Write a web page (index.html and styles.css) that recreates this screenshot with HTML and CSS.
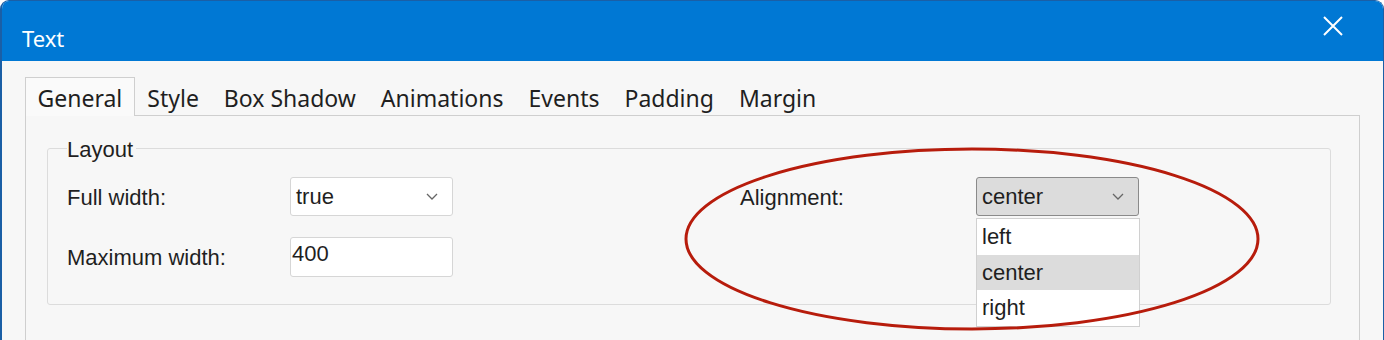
FILE: index.html
```html
<!DOCTYPE html>
<html lang="en">
<head>
  <meta charset="UTF-8" />
  <title>Text</title>
  <link rel="stylesheet" href="styles.css">
</head>
<body>
  <div class="window">
    <!-- TITLE BAR -->
    <header class="titlebar">
      <span class="title">Text</span>
      <svg class="close" width="20" height="20" viewBox="0 0 20 20">
        <path d="M1 1 L19 19 M19 1 L1 19" stroke="#fff" stroke-width="2" fill="none"/>
      </svg>
    </header>

    <div class="dialog-body">
      <!-- TABS -->
      <div class="tabs">
        <a class="tab active">General</a>
        <a class="tab">Style</a>
        <a class="tab">Box Shadow</a>
        <a class="tab">Animations</a>
        <a class="tab">Events</a>
        <a class="tab">Padding</a>
        <a class="tab">Margin</a>
      </div>

      <div class="tab-panel">
        <fieldset class="group">
          <legend>Layout</legend>
          <div class="form-grid">
            <label class="lbl">Full width:</label>
            <div class="select">
              <span>true</span>
              <svg class="chev" width="12" height="8" viewBox="0 0 12 8"><path d="M1 1 L6 6 L11 1" stroke="#666" stroke-width="1.3" fill="none"/></svg>
            </div>
            <span></span>
            <label class="lbl">Alignment:</label>
            <div class="select open">
              <span>center</span>
              <svg class="chev" width="12" height="8" viewBox="0 0 12 8"><path d="M1 1 L6 6 L11 1" stroke="#666" stroke-width="1.3" fill="none"/></svg>
              <ul class="options">
                <li>left</li>
                <li class="selected">center</li>
                <li>right</li>
              </ul>
            </div>

            <label class="lbl">Maximum width:</label>
            <div class="input">400</div>
          </div>
        </fieldset>
      </div>
    </div>

    <!-- annotation -->
    <svg class="mark" width="590" height="190" viewBox="0 0 590 190">
      <ellipse cx="295" cy="95" rx="286" ry="90" fill="none" stroke="#b71c0c" stroke-width="3"/>
    </svg>
  </div>
</body>
</html>
```

FILE: styles.css
```css
:root {
  --blue: #0078d4;
  --bg: #f7f7f7;
  --line: #cfcfcf;
  --text: #1f1f1f;
}

*, *::before, *::after { box-sizing: border-box; margin: 0; padding: 0; }
body {
  background: #fff;
  width: 1384px;
  height: 340px;
  overflow: hidden;
}

.window {
  position: relative;
  width: 1384px;
  height: 340px;
  background: var(--bg);
  border: 1px solid #1a5fa6;
  border-left-width: 2px;
  border-bottom: none;
  border-radius: 9px 9px 0 0;
  overflow: hidden;
}

/* TITLE BAR */
.titlebar {
  height: 60px;
  background: var(--blue);
  display: flex;
  align-items: center;
  justify-content: space-between;
  padding: 0 40px 0 20px;
}
.title {
  font-family: "Noto Sans", sans-serif;
  font-size: 22px;
  color: #fff;
  padding-top: 14px;
}
.close { margin-top: -10px; }

/* TABS */
.dialog-body {
  padding: 16px 23px 0 23px;
}
.tabs {
  display: flex;
  height: 38px;
  font-family: "Noto Sans", sans-serif;
  font-size: 23px;
  color: var(--text);
}
.tab {
  padding: 0 11.5px;
  line-height: 40px;
  border: 1px solid transparent;
  border-bottom: none;
}
.tab.active {
  background: #fafafa;
  border-color: var(--line);
  position: relative;
  z-index: 1;
  height: 39px;
}

.tab-panel {
  border: 1px solid var(--line);
  background: var(--bg);
  height: 240px;
  padding: 20px 28px 0 21px;
}

/* GROUP BOX */
.group {
  border: 1px solid #dcdcdc;
  border-radius: 3px;
  height: 169px;
  padding: 17px 0 0 19px;
  font-family: "Liberation Sans", Arial, sans-serif;
  font-size: 22px;
  color: var(--text);
}
.group legend {
  padding: 4px 3px 0 0;
  line-height: 20px;
}

.form-grid {
  display: grid;
  grid-template-columns: 223px 163px 287px 236px 163px;
  grid-auto-rows: 39px;
  row-gap: 21px;
  align-items: center;
}
.lbl { padding-top: 2px; }

.select {
  position: relative;
  height: 39px;
  border: 1px solid #d6d6d6;
  border-radius: 3px;
  background: #fff;
  display: flex;
  align-items: center;
  justify-content: space-between;
  padding: 0 14px 0 5px;
}
.select.open {
  background: #dcdcdc;
  border-color: #8a8a8a;
}
.chev { margin-top: 1px; }

.options {
  position: absolute;
  top: 40px;
  left: -1px;
  width: 164px;
  list-style: none;
  background: #fff;
  border: 1px solid #d0d0d0;
  z-index: 3;
}
.options li {
  height: 35.5px;
  line-height: 35px;
  padding-left: 5px;
}
.options li.selected { background: #dcdcdc; }

.input {
  height: 40px;
  border: 1px solid #d6d6d6;
  border-radius: 3px;
  background: #fff;
  padding: 3px 0 0 1px;
  margin-top: 1px;
}

/* red annotation ellipse */
.mark {
  position: absolute;
  left: 675px;
  top: 143px;
  z-index: 5;
  pointer-events: none;
}
```
